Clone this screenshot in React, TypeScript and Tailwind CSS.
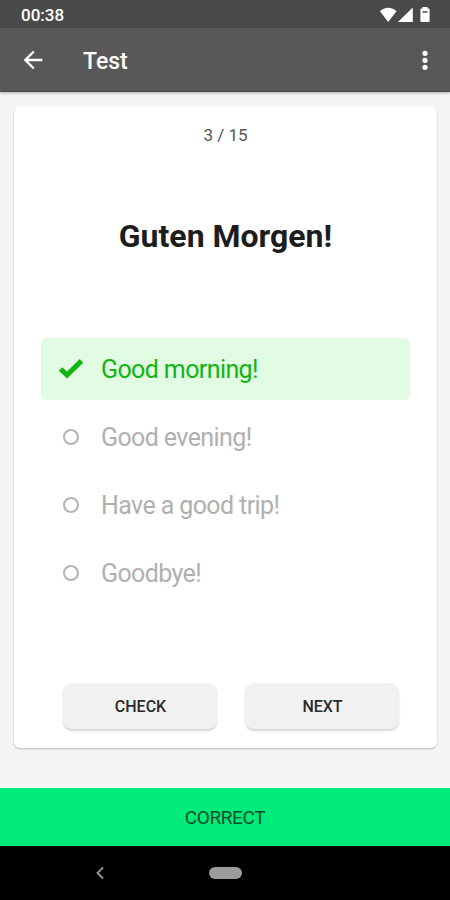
import { useState } from 'react';

const answers = ['Good morning!', 'Good evening!', 'Have a good trip!', 'Goodbye!'];
const correctIndex = 0;

function StatusBar() {
  return (
    <div className="flex h-7 items-center justify-between bg-[#4a4a4a] pl-[21px] pr-[18px] text-white">
      <span className="mt-px text-[17px] leading-5 font-medium">00:38</span>
      <svg className="mt-px" width="54" height="18" viewBox="0 0 54 18" fill="currentColor">
        <path d="M2 5.200C6.500.5 14 .5 18.500 5.200L10.200 16z" />
        <path d="M34.800 1.500V16H20z" />
        <path d="M43.200 2.500H44.500V1h5V2.500h1.300c.5 0 .8.400.8.900v11.700c0 .5-.3.900-.8.900h-7.600c-.5 0-.8-.4-.8-.9V3.400c0-.5.3-.9.8-.9z" />
        <path d="M44.500 5h5v2h-5z" fill="#777" />
      </svg>
    </div>
  );
}

function AppBar() {
  return (
    <header className="relative flex h-16 items-center border-b border-[#4b4b4b] bg-[#585858] text-white shadow-[0_1px_3px_rgba(0,0,0,0.3)]">
      <button aria-label="Back" className="ml-[19px] flex h-7 w-7 items-center justify-center">
        <svg width="28" height="28" viewBox="0 0 24 24" fill="currentColor">
          <path d="M20 11H7.830l5.590-5.590L12 4l-8 8 8 8 1.410-1.410L7.830 13H20v-2z" />
        </svg>
      </button>
      <h1 className="ml-9 pt-1 text-[23px] leading-7 font-medium">Test</h1>
      <button aria-label="More options" className="mr-[11px] ml-auto flex h-7 w-7 items-center justify-center">
        <svg width="28" height="28" viewBox="0 0 28 28" fill="currentColor">
          <circle cx="14" cy="7.300" r="2.600" />
          <circle cx="14" cy="14.300" r="2.600" />
          <circle cx="14" cy="21.300" r="2.600" />
        </svg>
      </button>
    </header>
  );
}

function Answer({ text, correct }: { text: string; correct: boolean }) {
  return (
    <li
      className={
        correct
          ? 'flex h-[62px] items-center rounded-[6px] bg-[#e1fce3] text-[#12b512]'
          : 'flex h-[62px] items-center rounded-[6px] text-[#b0b0b0]'
      }
    >
      <span className="ml-[17px] flex w-[26px] justify-center">
        {correct ? (
          <svg width="26" height="22" viewBox="0 0 26 22" fill="none">
            <path d="M2.500 11 9 17 23.500 2.900" stroke="currentColor" strokeWidth="5" />
          </svg>
        ) : (
          <span className="mr-px h-4 w-4 rounded-full border-2 border-[#b4b4b4]" />
        )}
      </span>
      <span className="ml-[17px] pt-0.5 text-[25px] leading-8 tracking-[-0.6px]">{text}</span>
    </li>
  );
}

function ActionButton({ label, onClick }: { label: string; onClick?: () => void }) {
  return (
    <button
      onClick={onClick}
      className="h-[46px] w-[154px] rounded-[9px] bg-[#f1f1f1] pt-px pl-px text-[16px] font-medium text-[#2a2a2a] shadow-[0_2px_2px_rgba(0,0,0,0.16)]"
    >
      {label}
    </button>
  );
}

export default function App() {
  const [checked, setChecked] = useState(true);

  return (
    <div className="flex h-[900px] w-[450px] flex-col overflow-hidden bg-[#f5f5f5] font-['Roboto',sans-serif]">
      <StatusBar />
      <AppBar />

      <main className="flex-1 pt-[14px] pr-[13px] pl-[14px]">
        <section className="flex h-[642px] flex-col rounded-[6px] bg-white shadow-[0_1px_2px_rgba(0,0,0,0.25)]">
          <p className="mt-[19px] text-center text-[17px] leading-5 text-[#555]">3 / 15</p>
          <h2 className="mt-[71px] text-center text-[32px] leading-10 font-bold text-[#1d1d1d]">
            Guten Morgen!
          </h2>
          <ul className="mx-[27px] mt-[82px] space-y-1.5">
            {answers.map((text, i) => (
              <Answer key={text} text={text} correct={checked && i === correctIndex} />
            ))}
          </ul>
          <div className="mt-auto mb-[19px] flex gap-7 pl-[49px]">
            <ActionButton label="CHECK" onClick={() => setChecked(true)} />
            <ActionButton label="NEXT" />
          </div>
        </section>
      </main>

      <div className="flex h-[58px] items-center justify-center bg-[#00eb7a] pt-[3px] text-[19px] tracking-[-0.4px] text-[#064f2a]">
        CORRECT
      </div>

      <nav className="flex h-[54px] items-center bg-black">
        <svg className="ml-[94px]" width="12" height="16" viewBox="0 0 12 16" fill="none" stroke="#999" strokeWidth="1.800">
          <path d="M9 2.500 3.500 8 9 13.500" />
        </svg>
        <span className="ml-[103px] h-3 w-[33px] rounded-full bg-[#9c9c9c]" />
      </nav>
    </div>
  );
}
